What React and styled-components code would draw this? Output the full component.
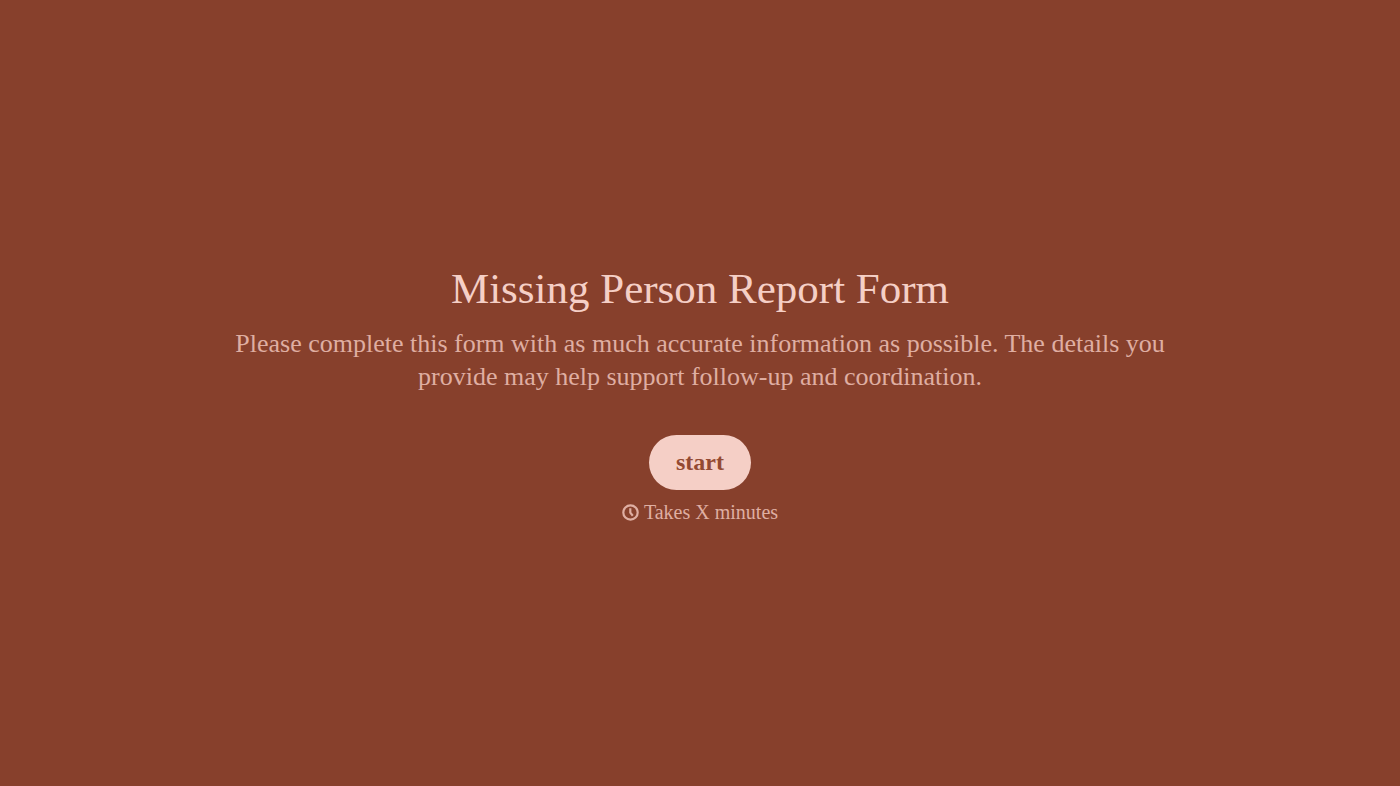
import React from 'react'
import styled, { createGlobalStyle } from 'styled-components'

const GlobalStyle = createGlobalStyle`
  * {
    box-sizing: border-box;
  }

  body {
    margin: 0;
    background: #87402c;
    color: #f5cfc6;
    font-family: 'Liberation Serif', 'Times New Roman', serif;
  }
`

const Page = styled.main`
  display: flex;
  flex-direction: column;
  align-items: center;
  justify-content: center;
  min-height: 100vh;
  padding: 24px;
  text-align: center;
`

const Title = styled.h1`
  margin: 0;
  font-size: 43px;
  font-weight: 400;
  line-height: 56px;
`

const Description = styled.p`
  max-width: 930px;
  margin: 10px 0 0;
  color: #dfaea2;
  font-size: 26px;
  line-height: 33px;
`

const StartButton = styled.button`
  height: 55px;
  margin-top: 42px;
  padding: 0 27px;
  border: 0;
  border-radius: 28px;
  background: #f5cfc6;
  color: #944a32;
  cursor: pointer;
  font-family: inherit;
  font-size: 24px;
  font-weight: 700;
  line-height: 33px;
`

const Duration = styled.p`
  display: flex;
  align-items: center;
  gap: 5px;
  margin: 9px 0 0;
  color: #dfaea2;
  font-size: 20px;
  line-height: 26px;
`

const ClockIcon = () => (
  <svg width="17" height="17" viewBox="0 0 17 17" fill="none" stroke="currentColor" strokeWidth="2.2" aria-hidden="true">
    <circle cx="8.5" cy="8.5" r="7.2" />
    <path d="M8.3 4.2v4.5l2.5 3.1" />
  </svg>
)

const App = () => (
  <>
    <GlobalStyle />
    <Page>
      <Title>Missing Person Report Form</Title>
      <Description>
        Please complete this form with as much accurate information as possible. The details you provide may help
        support follow-up and coordination.
      </Description>
      <StartButton type="button">start</StartButton>
      <Duration>
        <ClockIcon />
        Takes X minutes
      </Duration>
    </Page>
  </>
)

export default App
